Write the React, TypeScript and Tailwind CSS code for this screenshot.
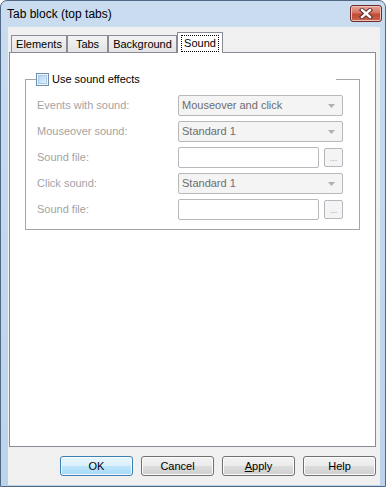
import React from 'react'

const tabs = [
  { label: 'Elements', w: 'w-[56px]' },
  { label: 'Tabs', w: 'w-[41px]' },
  { label: 'Background', w: 'w-[69px]' },
]

function Combo({ value }: { value: string }) {
  return (
    <div className="flex h-[21px] w-[165px] items-center justify-between rounded-[2px] border border-[#b8b8b8] bg-[#f4f4f4] pl-[3px] pr-[7px] text-[#6d6d6d]">
      <span>{value}</span>
      <svg width="7" height="4" viewBox="0 0 7 4">
        <path d="M0 0h7L3.5 4z" fill="#b0b0b0" />
      </svg>
    </div>
  )
}

function FileField() {
  return (
    <div className="flex items-center">
      <div className="h-[21px] w-[141px] rounded-[2px] border border-[#b5b9bd] bg-white" />
      <div className="ml-[5px] flex h-[19px] w-[19px] items-end justify-center rounded-[2px] border border-[#b5b9bd] bg-[#f4f4f4] pb-[3px] text-[9px] leading-[9px] text-[#a0a0a0]">
        ...
      </div>
    </div>
  )
}

function Row({ label, children }: { label: string; children: React.ReactNode }) {
  return (
    <div className="flex h-[21px] items-center">
      <span className="w-[141px] text-[#a3a3a3]">{label}</span>
      {children}
    </div>
  )
}

function DialogButton({ children, primary }: { children: React.ReactNode; primary?: boolean }) {
  return (
    <button
      className={
        primary
          ? 'flex h-[20px] w-[73px] items-center justify-center rounded-[3px] border border-[#3c7fb1] bg-[linear-gradient(#eaf6fd_0%,#d9f0fc_50%,#bee6fd_50%,#a7d9f5_100%)] shadow-[inset_0_0_0_1px_#f4fbfe] text-black'
          : 'flex h-[20px] w-[73px] items-center justify-center rounded-[3px] border border-[#707070] bg-[linear-gradient(#f2f2f2_0%,#ebebeb_50%,#dddddd_50%,#cfcfcf_100%)] shadow-[inset_0_0_0_1px_#fcfcfc] text-black'
      }
    >
      {children}
    </button>
  )
}

export default function App() {
  return (
    <div className="flex h-[487px] w-[386px] flex-col overflow-hidden rounded-t-[7px] border border-[#4f6884] bg-[linear-gradient(#c9dcf0,#bdd3ec)] font-['Liberation_Sans',Arial,sans-serif] text-[11px] leading-[13px] text-black">
      {/* title bar */}
      <div className="flex h-[26px] items-start justify-between pl-[6px] pr-[3px] pt-[4px]">
        <span className="mt-[2px] text-[12px] leading-[15px] text-black">Tab block (top tabs)</span>
        <div className="flex h-[17px] w-[32px] items-center justify-center rounded-[3px] border border-[#6d2b2b] bg-[linear-gradient(#e8a597_0%,#d47463_45%,#c24a36_55%,#c9634d_100%)] shadow-[inset_0_0_0_1px_#eec3b8]">
          <svg width="14" height="11" viewBox="0 0 14 11">
            <path d="M3 2l8 7M11 2l-8 7" stroke="#4a2020" strokeWidth="4.2" strokeLinecap="square" />
            <path d="M3 2l8 7M11 2l-8 7" stroke="#ffffff" strokeWidth="2.4" strokeLinecap="square" />
          </svg>
        </div>
      </div>

      {/* client area */}
      <div className="mb-[1px] ml-[7px] mr-[5px] flex h-[458px] flex-col bg-[#f0f0f0] pl-[1px] pr-[4px] pt-[5px]">
        <div className="flex h-[20px] items-end pl-[2px]">
          {tabs.map((t) => (
            <div
              key={t.label}
              className={`${t.w} flex h-[17px] items-center justify-center border border-b-0 border-[#898c95] bg-[linear-gradient(#f3f3f3,#e3e3e3)] pt-[1px]`}
            >
              {t.label}
            </div>
          ))}
          <div className="relative z-10 -mb-px flex h-[21px] w-[46px] items-start justify-center border border-b-0 border-[#898c95] bg-white pt-[2px]">
            <span className="border border-dotted border-black px-[2px] pb-[1px] pt-[1px]">Sound</span>
          </div>
        </div>

        <div className="h-[395px] border border-[#898c95] bg-white px-[15px]">
          <fieldset className="mt-[20px] border border-[#a5a5a5] pb-[9px] pl-[11px] pt-[9px]">
            <legend className="-ml-px flex w-[300px] items-center gap-[3px]">
              <span className="flex h-[13px] w-[13px] items-center justify-center border border-[#6f8faf] bg-[#eef6fc]">
                <span className="h-[9px] w-[9px] border border-[#a9cbe8] bg-[linear-gradient(135deg,#b3d5f1,#e2f0fb)]" />
              </span>
              <span>Use sound effects</span>
            </legend>
            <div className="flex flex-col gap-[5px]">
              <Row label="Events with sound:">
                <Combo value="Mouseover and click" />
              </Row>
              <Row label="Mouseover sound:">
                <Combo value="Standard 1" />
              </Row>
              <Row label="Sound file:">
                <FileField />
              </Row>
              <Row label="Click sound:">
                <Combo value="Standard 1" />
              </Row>
              <Row label="Sound file:">
                <FileField />
              </Row>
            </div>
          </fieldset>
        </div>

        <div className="mt-[9px] flex justify-end gap-[8px]">
          <DialogButton primary>OK</DialogButton>
          <DialogButton>Cancel</DialogButton>
          <DialogButton>
            <span>
              <span className="underline">A</span>pply
            </span>
          </DialogButton>
          <DialogButton>Help</DialogButton>
        </div>
      </div>
    </div>
  )
}
